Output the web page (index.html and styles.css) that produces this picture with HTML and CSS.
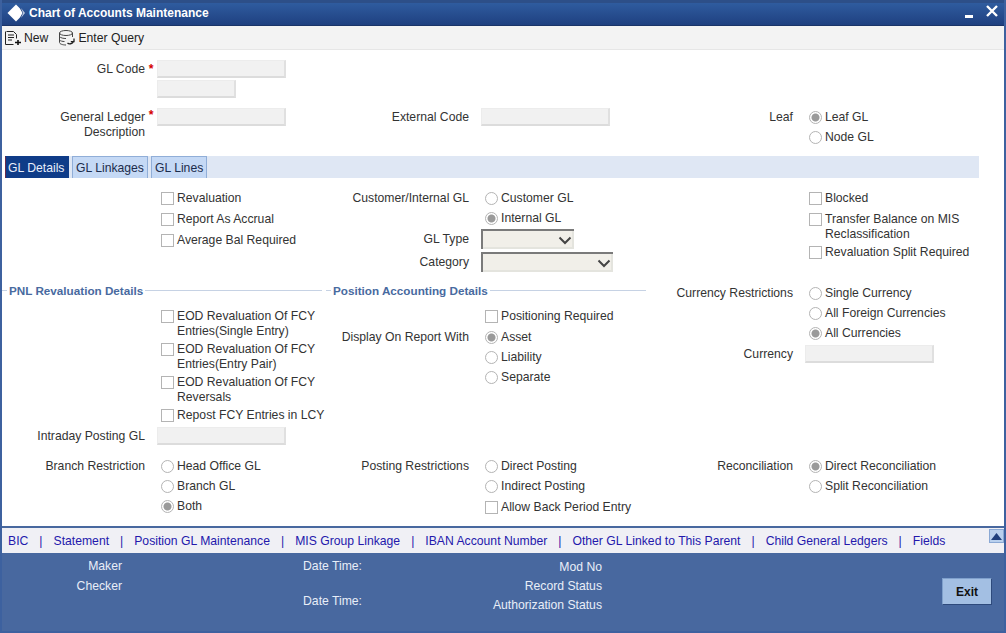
FILE: index.html
```html
<!DOCTYPE html>
<html lang="en">
<head>
<meta charset="utf-8">
<title>Chart of Accounts Maintenance</title>
<link rel="stylesheet" href="styles.css">
</head>
<body>
<div class="window">
  <header class="titlebar">
    <svg class="logo" width="18" height="18" viewBox="0 0 18 18"><path d="M9 0.500 17.500 9 9 17.500 0.500 9Z" fill="#fff"/><path d="M12.500 3.500 18 9l-5.500 5.500L15.500 9Z" fill="#1f4080"/><path d="M14 4 18 9l-4 5 2-5Z" fill="#b9c8e0"/></svg>
    <h1 class="title">Chart of Accounts Maintenance</h1>
    <svg class="winctl" width="40" height="16" viewBox="0 0 40 16"><path d="M1 11h8v3H1Z" fill="#fff"/><path d="M23 2 33 12M33 2 23 12" stroke="#fff" stroke-width="2.400" fill="none"/></svg>
  </header>
  <nav class="toolbar">
    <span class="tool">
      <svg width="18" height="16" viewBox="0 0 18 16"><path d="M2.500 1.500h7l3 3v4M1.500 1.500v13h8M4 5h6M4 7.500h6M4 10h4" stroke="#222" fill="none"/><path d="M14 10v5M11 12.500h6" stroke="#111" stroke-width="1.600"/></svg>
      New
    </span>
    <span class="tool">
      <svg width="18" height="16" viewBox="0 0 18 16"><ellipse cx="8" cy="3" rx="6.500" ry="2.500" fill="#f4f4f4" stroke="#444"/><path d="M1.500 3v9.500c0 1.400 3 2.500 6.500 2.500M14.500 3v4M1.500 6.500c1 1.500 4 2 6.500 2M1.500 10c1 1 3 1.500 5 1.500" stroke="#444" fill="none"/><path d="M9.500 13c1.500 1.500 5 1 6-1.500M16 8.500v3.200h-3.200" stroke="#222" stroke-width="1.300" fill="none"/></svg>
      Enter Query
    </span>
  </nav>
  <main class="main">
    <section class="cols sec-head">
      <div class="col">
        <div class="field compact"><label class="lbl">GL Code</label><span class="req">*</span><input class="text wide"></div>
        <div class="field compact gap-2"><input class="text short"></div>
        <div class="field compact gap-10 top"><label class="lbl desc">General Ledger Description</label><span class="req">*</span><input class="text wide"></div>
      </div>
      <div class="col push-47">
        <div class="field"><label class="lbl">External Code</label><input class="text wide"></div>
      </div>
      <div class="col push-47">
        <div class="field"><label class="lbl">Leaf</label><label class="opt"><input type="radio" name="leaf" checked>Leaf GL</label></div>
        <div class="field"><label class="opt"><input type="radio" name="leaf">Node GL</label></div>
      </div>
    </section>

    <div class="tabs">
      <span class="tab active">GL Details</span>
      <span class="tab">GL Linkages</span>
      <span class="tab">GL Lines</span>
    </div>

    <section class="cols sec-details">
      <div class="col">
        <div class="field tall"><label class="opt"><input type="checkbox">Revaluation</label></div>
        <div class="field tall"><label class="opt"><input type="checkbox">Report As Accrual</label></div>
        <div class="field tall"><label class="opt"><input type="checkbox">Average Bal Required</label></div>
      </div>
      <div class="col">
        <div class="field"><label class="lbl">Customer/Internal GL</label><label class="opt"><input type="radio" name="ci">Customer GL</label></div>
        <div class="field"><label class="opt"><input type="radio" name="ci" checked>Internal GL</label></div>
        <div class="field pick first"><label class="lbl">GL Type</label><span class="select s-93"><svg width="14" height="9" viewBox="0 0 14 9"><path d="M1.500 1.500 7 7l5.500-5.500" stroke="#444" stroke-width="2" fill="none"/></svg></span></div>
        <div class="field pick"><label class="lbl">Category</label><span class="select s-132"><svg width="14" height="9" viewBox="0 0 14 9"><path d="M1.500 1.500 7 7l5.500-5.500" stroke="#444" stroke-width="2" fill="none"/></svg></span></div>
      </div>
      <div class="col">
        <div class="field tall"><label class="opt"><input type="checkbox">Blocked</label></div>
        <div class="field multi"><label class="opt"><input type="checkbox"><span>Transfer Balance on MIS<br>Reclassification</span></label></div>
        <div class="field multi"><label class="opt"><input type="checkbox">Revaluation Split Required</label></div>
      </div>
    </section>

    <section class="cols sec-reval">
      <div class="col">
        <h2 class="head"><span>PNL Revaluation Details</span></h2>
        <div class="field multi first-check"><label class="opt"><input type="checkbox"><span>EOD Revaluation Of FCY<br>Entries(Single Entry)</span></label></div>
        <div class="field multi"><label class="opt"><input type="checkbox"><span>EOD Revaluation Of FCY<br>Entries(Entry Pair)</span></label></div>
        <div class="field multi"><label class="opt"><input type="checkbox"><span>EOD Revaluation Of FCY<br>Reversals</span></label></div>
        <div class="field multi"><label class="opt"><input type="checkbox">Repost FCY Entries in LCY</label></div>
        <div class="field intraday"><label class="lbl">Intraday Posting GL</label><input class="text wide"></div>
      </div>
      <div class="col">
        <h2 class="head"><span>Position Accounting Details</span></h2>
        <div class="field gap-8"><label class="opt"><input type="checkbox">Positioning Required</label></div>
        <div class="field gap-1"><label class="lbl">Display On Report With</label><label class="opt"><input type="radio" name="rep" checked>Asset</label></div>
        <div class="field"><label class="opt"><input type="radio" name="rep">Liability</label></div>
        <div class="field"><label class="opt"><input type="radio" name="rep">Separate</label></div>
      </div>
      <div class="col push-1">
        <div class="field"><label class="lbl">Currency Restrictions</label><label class="opt"><input type="radio" name="cur">Single Currency</label></div>
        <div class="field"><label class="opt"><input type="radio" name="cur">All Foreign Currencies</label></div>
        <div class="field"><label class="opt"><input type="radio" name="cur" checked>All Currencies</label></div>
        <div class="field gap-1"><label class="lbl">Currency</label><input class="text wide"></div>
      </div>
    </section>

    <section class="cols sec-post">
      <div class="col">
        <div class="field"><label class="lbl">Branch Restriction</label><label class="opt"><input type="radio" name="br">Head Office GL</label></div>
        <div class="field"><label class="opt"><input type="radio" name="br">Branch GL</label></div>
        <div class="field"><label class="opt"><input type="radio" name="br" checked>Both</label></div>
      </div>
      <div class="col">
        <div class="field"><label class="lbl">Posting Restrictions</label><label class="opt"><input type="radio" name="po">Direct Posting</label></div>
        <div class="field"><label class="opt"><input type="radio" name="po">Indirect Posting</label></div>
        <div class="field gap-1"><label class="opt"><input type="checkbox">Allow Back Period Entry</label></div>
      </div>
      <div class="col">
        <div class="field"><label class="lbl">Reconciliation</label><label class="opt"><input type="radio" name="re" checked>Direct Reconciliation</label></div>
        <div class="field"><label class="opt"><input type="radio" name="re">Split Reconciliation</label></div>
      </div>
    </section>
  </main>

  <nav class="links">
    <a>BIC</a><i>|</i><a>Statement</a><i>|</i><a>Position GL Maintenance</a><i>|</i><a>MIS Group Linkage</a><i>|</i><a>IBAN Account Number</a><i>|</i><a>Other GL Linked to This Parent</a><i>|</i><a>Child General Ledgers</a><i>|</i><a>Fields</a>
    <span class="scroll"><svg width="11" height="7" viewBox="0 0 11 7"><path d="M5.500 0 11 7H0Z" fill="#1f3f7d"/></svg></span>
  </nav>

  <footer class="footer">
    <div class="audit a1"><span>Maker</span><span>Checker</span></div>
    <div class="audit a2"><span>Date Time:</span><span>Date Time:</span></div>
    <div class="audit a3"><span>Mod No</span><span>Record Status</span><span>Authorization Status</span></div>
    <button class="exit">Exit</button>
  </footer>
</div>
</body>
</html>
```
FILE: styles.css
```css
* { box-sizing: border-box; }
html, body { margin: 0; padding: 0; }
body { font-family: "Liberation Sans", Arial, sans-serif; font-size: 12.2px; color: #333; background: #fff; }

.window { width: 1006px; height: 633px; display: flex; flex-direction: column; border: solid #3d619f; border-width: 0 2px 2px; background: #fff; overflow: hidden; }

.titlebar { height: 26px; flex: none; margin: 0 -2px; padding: 0 7px 0 7px; display: flex; align-items: center; background: linear-gradient(#2f5c9f, #1f4080); border-top: 3px solid #2d4f88; border-bottom: 1px solid #1a3468; }
.logo { flex: none; margin-top: -3px; }
.title { margin: -3px 0 0 4px; flex: 1; font-size: 12px; font-weight: bold; color: #fff; line-height: 16px; }
.winctl { flex: none; margin: -5px -5px 0 0; }

.toolbar { height: 24px; flex: none; display: flex; align-items: center; gap: 10px; padding: 0 0 0 2px; background: #f3f3f3; border-bottom: 1px solid #e6e6e6; }
.tool { display: flex; align-items: center; gap: 2px; color: #222; }

.main { flex: 1; padding-top: 10px; min-height: 0; }
.cols { display: grid; grid-template-columns: repeat(3, 324px); }
.col { display: flex; flex-direction: column; }

.field { display: grid; grid-template-columns: 143px 12px 1fr; align-items: center; min-height: 20px; line-height: 15px; }
.field > input, .field > .opt, .field > .select { grid-column: 3; }
.field.top { align-items: start; }
.compact { min-height: 18px; }
.tall { min-height: 21px; }
.multi { margin-top: 3px; min-height: 15px; align-items: start; }
.first-check { margin-top: 11px; }
.intraday { margin-top: 3px; }
.gap-1 { margin-top: 1px; }
.gap-2 { margin-top: 2px; }
.gap-8 { margin-top: 8px; }
.gap-10 { margin-top: 10px; }
.push-1 { margin-top: 1px; }
.push-47 { margin-top: 47px; }

.lbl { text-align: right; grid-column: 1; color: #333; }
.lbl.desc { padding-top: 2px; }
.req { color: #d40000; font-weight: bold; text-align: center; grid-column: 2; }
.text { height: 18px; padding: 0; background: #f1f1f1; border: solid #e2e2e2; border-width: 1px 2px 2px 1px; border-color: #ececec #e0e0e0 #dcdcdc #ececec; display: block; }
.wide { width: 129px; }
.short { width: 79px; }

.opt { display: flex; align-items: flex-start; padding-left: 4px; color: #333; white-space: nowrap; }
.opt input { appearance: none; width: 13px; height: 13px; margin: 1px 3px 0 0; flex: none; background: #fff; border: 1px solid #b4b4b4; }
.opt input[type="radio"] { border-radius: 50%; }
.opt input[type="radio"]:checked { background: radial-gradient(circle, #9a9a9a 0, #9a9a9a 3.500px, #fff 4.500px); }

.sec-head { min-height: 88px; }

.tabs { height: 22px; margin: 8px 25px 0 3px; display: flex; gap: 3px; background: #dfe7f4; }
.tab { display: flex; align-items: center; padding: 0 3px; background: #c5d9f5; border: 1px solid #90aed8; border-bottom: 0; color: #1c2c4c; }
.tab.active { padding: 0 3.500px 0 2px; background: #0f3c88; border-color: #0f3c88; color: #e8eefa; border-left-color: #6a2a4a; }

.sec-details { margin-top: 10px; }
.pick { min-height: 20px; }
.pick.first { margin-top: 1px; }
.pick + .pick { margin-top: 3px; }
.select { height: 20px; background: #f1efe9; border: solid #7a7a7a; border-width: 2px 0 0 2px; display: flex; align-items: center; justify-content: flex-end; padding-right: 2px; box-shadow: inset -2px -2px 0 #e4e4de; }
.s-93 { width: 93px; }
.s-132 { width: 132px; }

.sec-reval { margin-top: 10px; }
.head { margin: 0 4px 0 0; height: 16px; display: flex; align-items: center; font-size: 11.7px; font-weight: bold; color: #486a9f; }
.head::before { content: ""; width: 5px; margin-right: 2px; border-top: 1px solid #c6d2e4; }
.head::after { content: ""; flex: 1; margin-left: 2px; border-top: 1px solid #c6d2e4; }

.sec-post { margin-top: 10px; }

.links { height: 27px; flex: none; display: flex; align-items: center; gap: 11px; padding: 0 0 0 6px; background: #f0f0f5; border-top: 2px solid #48689f; color: #2418ac; white-space: nowrap; }
.links a { color: #2418ac; }
.links i { font-style: normal; color: #2418ac; }
.scroll { margin-left: auto; align-self: flex-start; margin-top: 1px; width: 15px; height: 14px; display: flex; align-items: center; justify-content: center; background: #b9d0ee; border: 1px solid #8aa8d4; }

.footer { flex: 0 0 78px; display: flex; align-items: flex-start; background: #48689f; color: #e8eef8; }
.audit { display: flex; flex-direction: column; text-align: right; padding-top: 6px; line-height: 15px; }
.a1 { width: 120px; gap: 5px; }
.a2 { width: 240px; gap: 20px; }
.a3 { width: 240px; gap: 4px; padding-top: 7px; }
.exit { margin: 25px 12px 0 auto; width: 50px; height: 27px; padding: 0; font: bold 12px "Liberation Sans", Arial, sans-serif; color: #111; background: #a3bfe3; border: 1px solid; border-color: #7fa0cc #2e4a7c #2e4a7c #7fa0cc; }
```
